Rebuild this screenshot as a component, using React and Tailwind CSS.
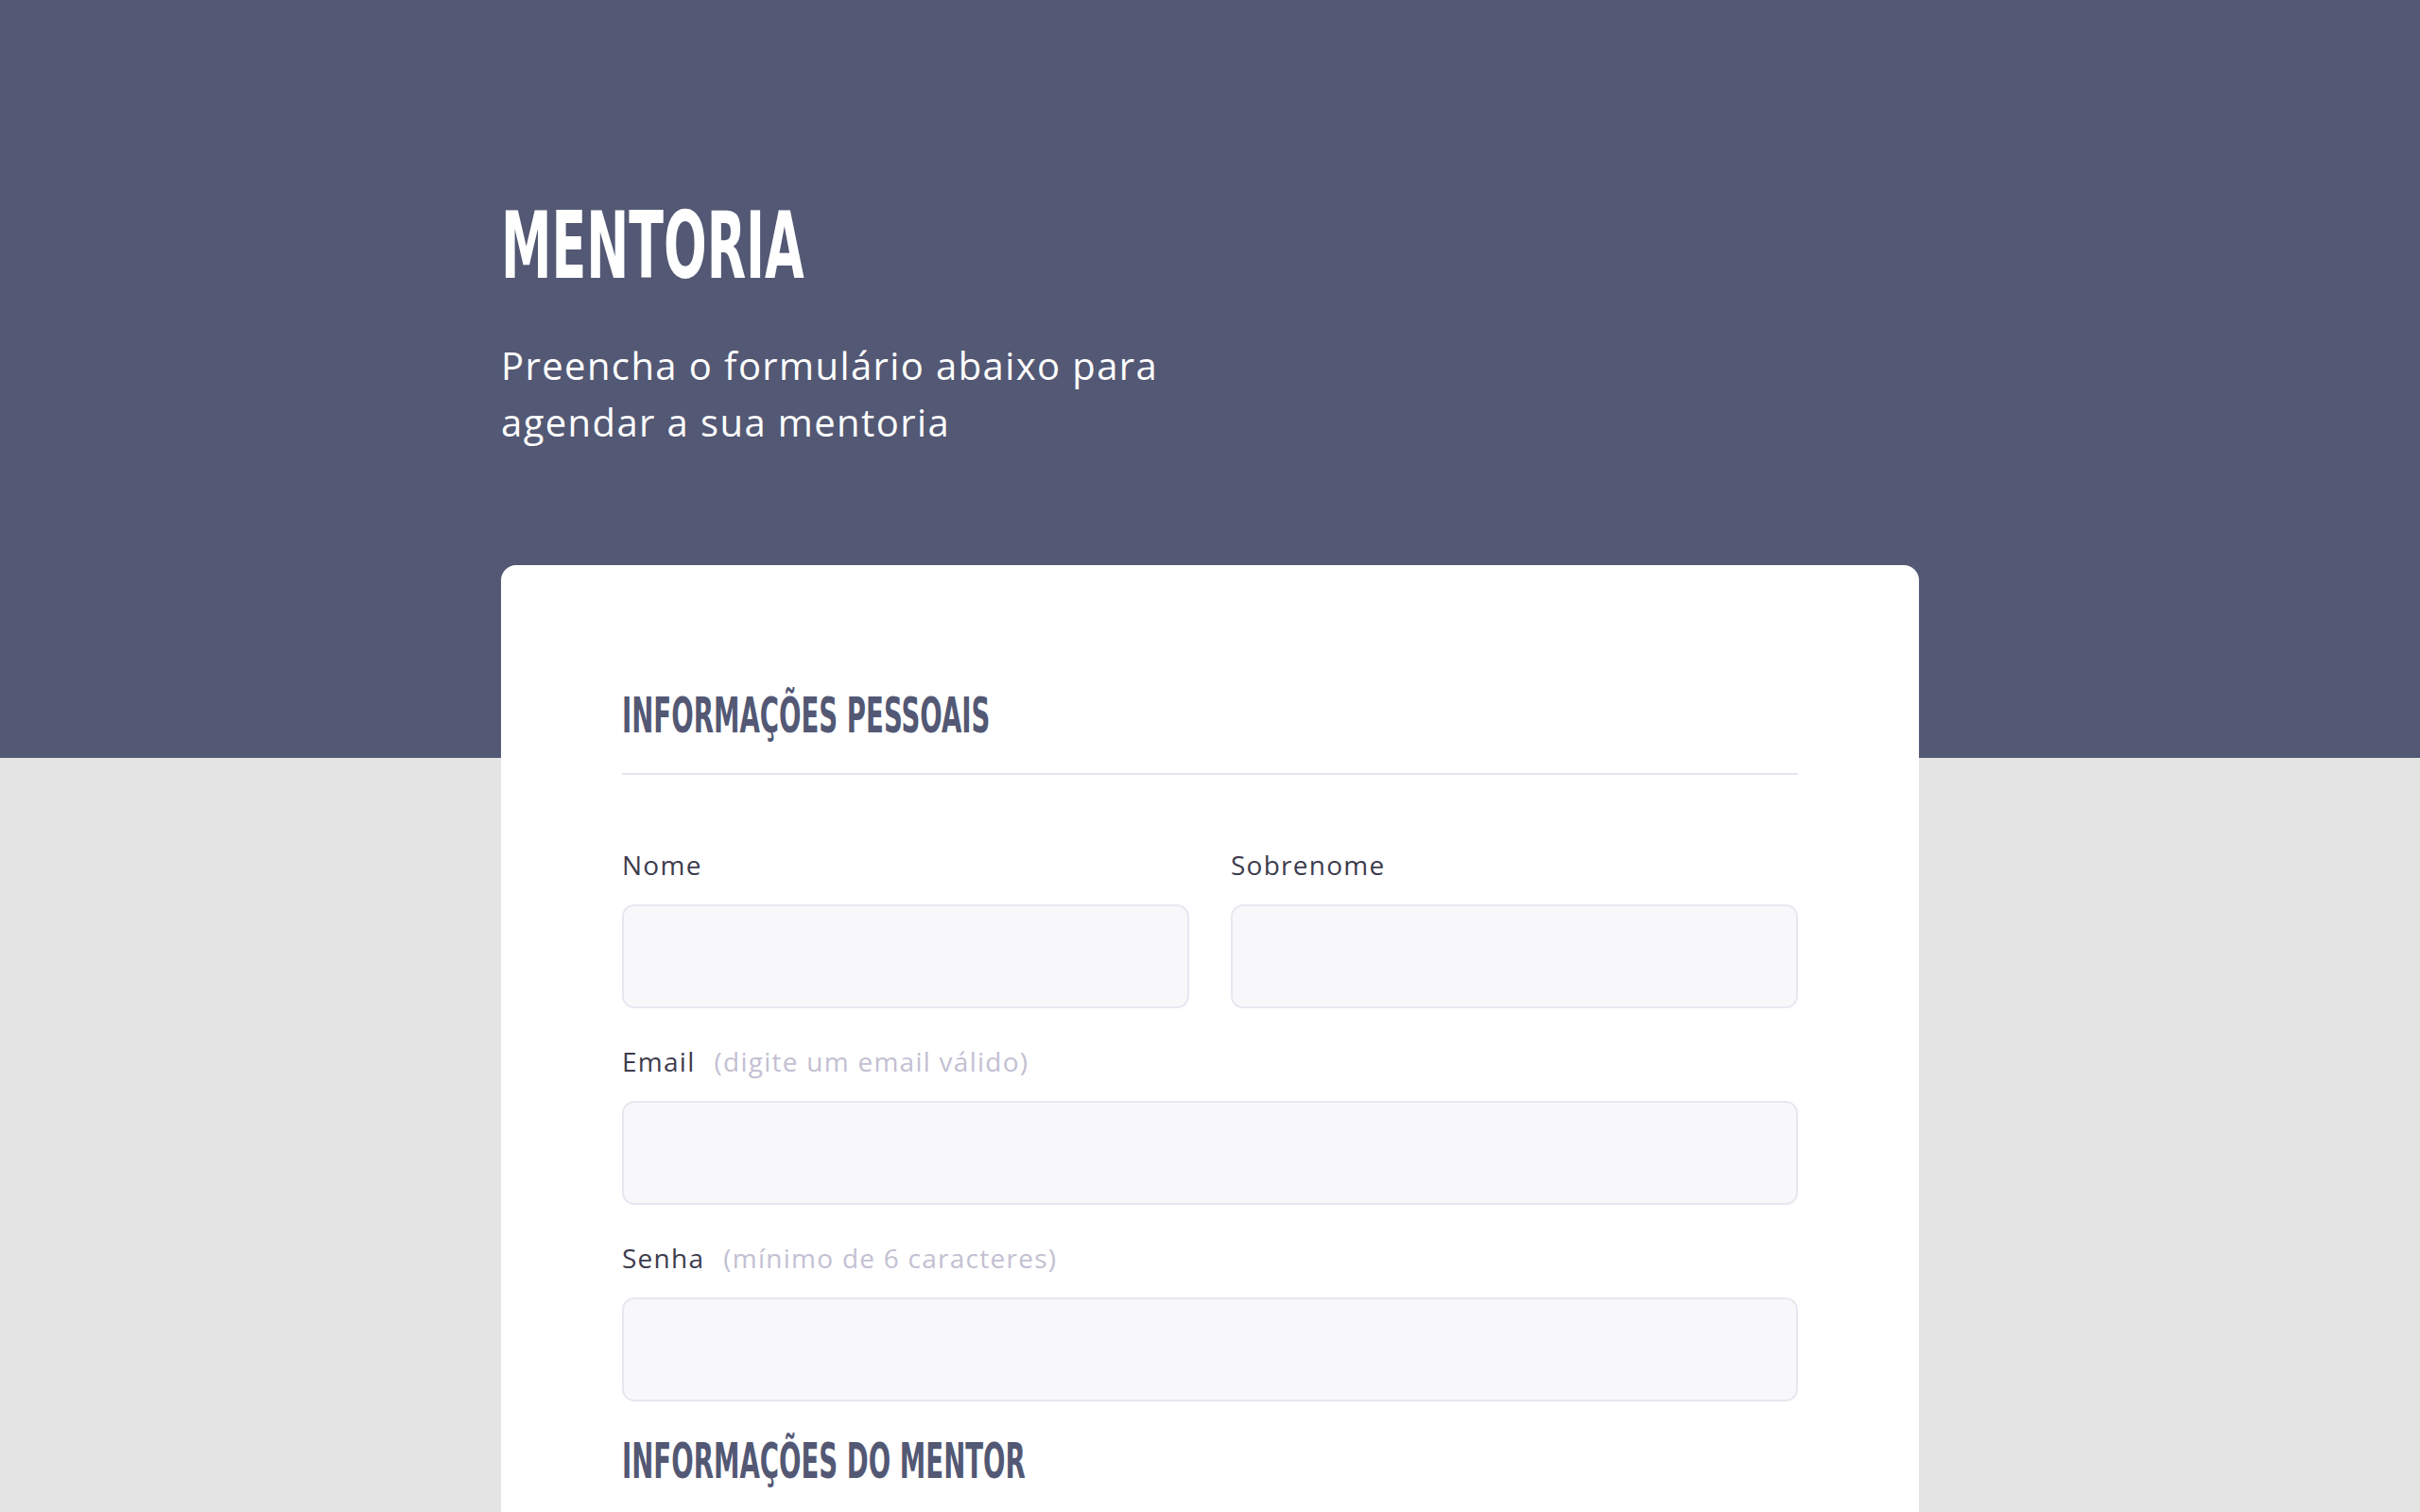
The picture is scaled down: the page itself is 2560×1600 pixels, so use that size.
import { useState } from "react";

const display = "font-['Liberation_Sans_Narrow','DejaVu_Sans_Condensed',sans-serif] font-bold";
const body = "font-['Open_Sans','Noto_Sans',sans-serif]";

function Field({ label, hint, type = "text" }) {
    const [value, setValue] = useState("");
    return (
        <div className="flex flex-col">
            <label className={`${body} flex gap-[20px] text-[28px] leading-[40px] tracking-[0.045em] mb-[22px]`}>
                <span className="text-[#3d3c4d]">{label}</span>
                {hint && <span className="text-[#c3c0d2]">{hint}</span>}
            </label>
            <input
                type={type}
                value={value}
                onChange={(e) => setValue(e.target.value)}
                className="h-[110px] w-full rounded-[13px] border-2 border-[#e8e7f0] bg-[#f8f8fb] px-6 text-[28px] outline-none"
            />
        </div>
    );
}

function SectionTitle({ children }) {
    return (
        <h2 className={`${display} text-[52px] leading-none text-[#535874] uppercase`}>
            <span className="inline-block origin-left scale-x-[0.59]">{children}</span>
        </h2>
    );
}

function App() {
    return (
        <div className="min-h-screen bg-[#e4e4e4]">
            <header className="h-[802px] bg-[#535874]">
                <div className="mx-auto w-[1500px] pt-[211px]">
                    <h1 className={`${display} text-[98px] leading-none text-white`}>
                        <span className="inline-block origin-left scale-x-[0.61]">MENTORIA</span>
                    </h1>
                    <p className={`${body} mt-[48px] max-w-[780px] text-[40px] leading-[60px] tracking-[0.035em] text-white`}>
                        Preencha o formulário abaixo para agendar a sua mentoria
                    </p>
                </div>
            </header>

            <main className="relative mx-auto -mt-[204px] w-[1500px] rounded-[16px] bg-white px-[128px] pt-[133px] pb-[128px]">
                <SectionTitle>Informações pessoais</SectionTitle>
                <div className="mt-[35px] mb-[75px] h-[2px] bg-[#e6e5f0]" />

                <div className="flex flex-col gap-[36px]">
                    <div className="grid grid-cols-2 gap-[44px]">
                        <Field label="Nome" />
                        <Field label="Sobrenome" />
                    </div>
                    <Field label="Email" hint="(digite um email válido)" type="email" />
                    <Field label="Senha" hint="(mínimo de 6 caracteres)" type="password" />
                </div>

                <div className="mt-[37px]">
                    <SectionTitle>Informações do mentor</SectionTitle>
                </div>
                <div className="mt-[35px] mb-[75px] h-[2px] bg-[#e6e5f0]" />

                <div className="flex flex-col gap-[36px]">
                    <Field label="Nome do mentor" />
                    <Field label="Data" hint="(dd/mm/aaaa)" />
                </div>
            </main>
        </div>
    );
}

export default App;
